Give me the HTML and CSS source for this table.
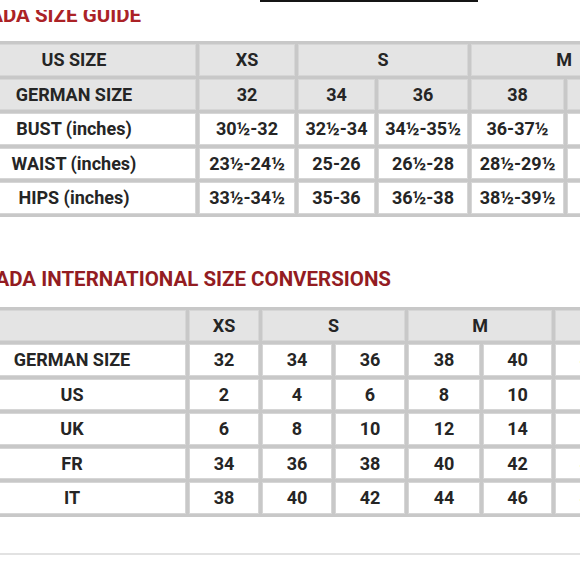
FILE: index.html
```html
<!DOCTYPE html>
<html>
<head>
<meta charset="utf-8">
<link rel="stylesheet" href="styles.css">
</head>
<body>
<div class="page">
  <div class="topbar"><div class="blackbar"></div></div>
  <div class="title-clip">
    <div class="title t1"><span>PRADA SIZE GUIDE</span></div>
  </div>
  <table class="grid g1">
    <colgroup>
      <col class="a1"><col class="a2"><col class="a3"><col class="a4"><col class="a5"><col class="a6">
    </colgroup>
    <tr class="head"><td>US SIZE</td><td>XS</td><td colspan="2">S</td><td colspan="2">M</td></tr>
    <tr class="head"><td>GERMAN SIZE</td><td>32</td><td>34</td><td>36</td><td>38</td><td>40</td></tr>
    <tr><td>BUST (inches)</td><td>30½-32</td><td>32½-34</td><td>34½-35½</td><td>36-37½</td><td>38-39½</td></tr>
    <tr><td>WAIST (inches)</td><td>23½-24½</td><td>25-26</td><td>26½-28</td><td>28½-29½</td><td>30-31½</td></tr>
    <tr><td>HIPS (inches)</td><td>33½-34½</td><td>35-36</td><td>36½-38</td><td>38½-39½</td><td>40-41½</td></tr>
  </table>
  <div class="title t2"><span>PRADA INTERNATIONAL SIZE CONVERSIONS</span></div>
  <table class="grid g2">
    <colgroup>
      <col class="b1"><col class="b2"><col class="b3"><col class="b4"><col class="b5"><col class="b6"><col class="b7">
    </colgroup>
    <tr class="head"><td></td><td>XS</td><td colspan="2">S</td><td colspan="2">M</td><td>L</td></tr>
    <tr><td>GERMAN SIZE</td><td>32</td><td>34</td><td>36</td><td>38</td><td>40</td><td>42</td></tr>
    <tr><td>US</td><td>2</td><td>4</td><td>6</td><td>8</td><td>10</td><td>12</td></tr>
    <tr><td>UK</td><td>6</td><td>8</td><td>10</td><td>12</td><td>14</td><td>16</td></tr>
    <tr><td>FR</td><td>34</td><td>36</td><td>38</td><td>40</td><td>42</td><td>44</td></tr>
    <tr><td>IT</td><td>38</td><td>40</td><td>42</td><td>44</td><td>46</td><td>48</td></tr>
  </table>
  <div class="rule"></div>
</div>
</body>
</html>
```
FILE: styles.css
```css
html, body {
  margin: 0;
  padding: 0;
  background: #ffffff;
}
body {
  font-family: Roboto, "Liberation Sans", sans-serif;
  overflow: hidden;
}
.page {
  width: 580px;
  height: 580px;
  overflow: hidden;
}
.topbar {
  height: 10px;
}
.blackbar {
  margin-left: 260px;
  width: 218px;
  height: 2px;
  background: #151515;
}
.title-clip {
  height: 14px;
  overflow: hidden;
}
.title {
  display: flex;
  justify-content: flex-end;
  white-space: nowrap;
  font-size: 20.5px;
  line-height: 24px;
  font-weight: 700;
}
.t1 {
  width: 141px;
  margin-top: -7px;
  color: #ab2226;
}
.t2 {
  width: 391px;
  margin-top: 50px;
  color: #931c22;
}
.grid {
  border-collapse: separate;
  border-spacing: 3px;
  background: #c8c8c8;
  table-layout: fixed;
}
.grid td {
  height: 31.5px;
  padding: 0;
  text-align: center;
  vertical-align: middle;
  font-size: 18px;
  font-weight: 700;
  color: #252525;
  background: #ffffff;
  box-shadow: inset 0 0 0 1px #d6d6d6;
  white-space: nowrap;
  overflow: hidden;
}
.grid tr.head td {
  background: #e4e4e4;
}
.g1 {
  width: 711px;
  margin-left: -51px;
  margin-top: 17px;
}
.a1 { width: 244px; }
.a2 { width: 96px; }
.a3 { width: 77px; }
.a4 { width: 90px; }
.a5 { width: 93px; }
.a6 { width: 90px; }
.g2 {
  width: 673px;
  margin-left: -45px;
  margin-top: 16px;
}
.b1 { width: 228px; }
.b2 { width: 70px; }
.b3 { width: 70px; }
.b4 { width: 70px; }
.b5 { width: 72px; }
.b6 { width: 69px; }
.b7 { width: 70px; }
.rule {
  margin-top: 36px;
  height: 2px;
  background: #e2e2e2;
}
```
